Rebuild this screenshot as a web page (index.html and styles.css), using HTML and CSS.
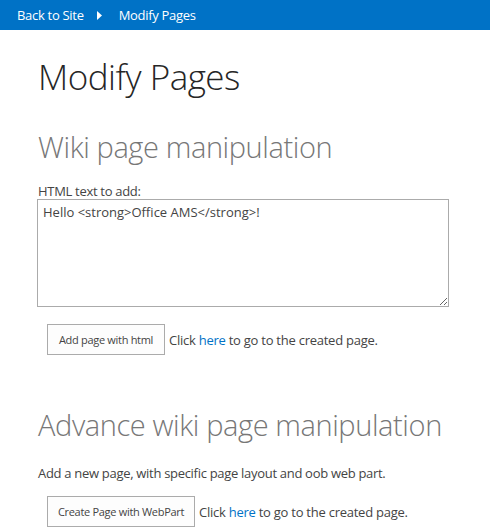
FILE: index.html
```html
<!DOCTYPE html>
<html>
<head>
<meta charset="utf-8">
<link rel="stylesheet" href="styles.css">
</head>
<body>
<div class="topbar">
  <a class="crumb" href="#">Back to Site</a>
  <svg class="sep" width="6" height="9" viewBox="0 0 6 9"><path d="M0 0 L5 4.5 L0 9 Z" fill="#fff"/></svg>
  <span class="crumb">Modify Pages</span>
</div>
<div class="content">
  <h1 class="title">Modify Pages</h1>
  <h2 class="section">Wiki page manipulation</h2>
  <div class="label">HTML text to add:</div>
  <textarea class="editor">Hello &lt;strong&gt;Office AMS&lt;/strong&gt;!</textarea>
  <div class="action">
    <button class="btn btn-html">Add page with html</button>
    <span class="note">Click <a href="#">here</a> to go to the created page.</span>
  </div>
  <h2 class="section section2">Advance wiki page manipulation</h2>
  <p class="desc">Add a new page, with specific page layout and oob web part.</p>
  <div class="action action2">
    <button class="btn btn-wp">Create Page with WebPart</button>
    <span class="note">Click <a href="#">here</a> to go to the created page.</span>
  </div>
</div>
</body>
</html>
```
FILE: styles.css
```css
html, body {
  margin: 0;
  padding: 0;
  background: #fff;
  font-family: "Open Sans", "Noto Sans", sans-serif;
  color: #444;
  overflow: hidden;
}
.topbar {
  height: 30px;
  background: #0072c6;
  display: flex;
  align-items: center;
  padding-left: 17px;
  font-size: 13px;
  color: #fff;
}
.crumb {
  color: #fff;
  text-decoration: none;
  letter-spacing: -0.3px;
}
.sep {
  margin: 0 16px 0 13px;
}
.content {
  padding-left: 38px;
}
.title {
  margin: 0;
  padding-top: 23px;
  font-size: 35px;
  font-weight: 300;
  line-height: 48px;
  color: #262626;
  letter-spacing: -0.5px;
}
.section {
  margin: 0;
  padding-top: 26px;
  font-size: 29px;
  font-weight: 300;
  line-height: 40px;
  color: #777;
  letter-spacing: -0.4px;
}
.label {
  margin-top: 17px;
  font-size: 13px;
  line-height: 15px;
  color: #444;
  letter-spacing: -0.3px;
}
.editor {
  display: block;
  box-sizing: border-box;
  width: 412px;
  height: 108px;
  margin: 0 0 0 -1px;
  border: 1px solid #ababab;
  padding: 3px 5px;
  font-family: "Open Sans", "Noto Sans", sans-serif;
  font-size: 13px;
  color: #444;
  resize: both;
  letter-spacing: 0;
}
.action {
  display: flex;
  align-items: center;
  margin-top: 17px;
  margin-left: 9px;
}
.btn {
  box-sizing: border-box;
  height: 31px;
  border: 1px solid #ababab;
  background: #fdfdfd;
  font-family: "Open Sans", "Noto Sans", sans-serif;
  font-size: 11px;
  color: #444;
  padding: 0;
  margin: 0 4px 0 0;
  white-space: nowrap;
  letter-spacing: -0.3px;
}
.btn-html { width: 118px; }
.btn-wp { width: 148px; }
.note {
  font-size: 13px;
  color: #444;
  letter-spacing: -0.25px;
}
.note a {
  color: #0072c6;
  text-decoration: none;
}
.section2 {
  padding-top: 50px;
}
.desc {
  margin: 19px 0 0;
  font-size: 13px;
  line-height: 18px;
  color: #444;
  letter-spacing: -0.3px;
}
.action2 {
  margin-top: 14px;
}
```
